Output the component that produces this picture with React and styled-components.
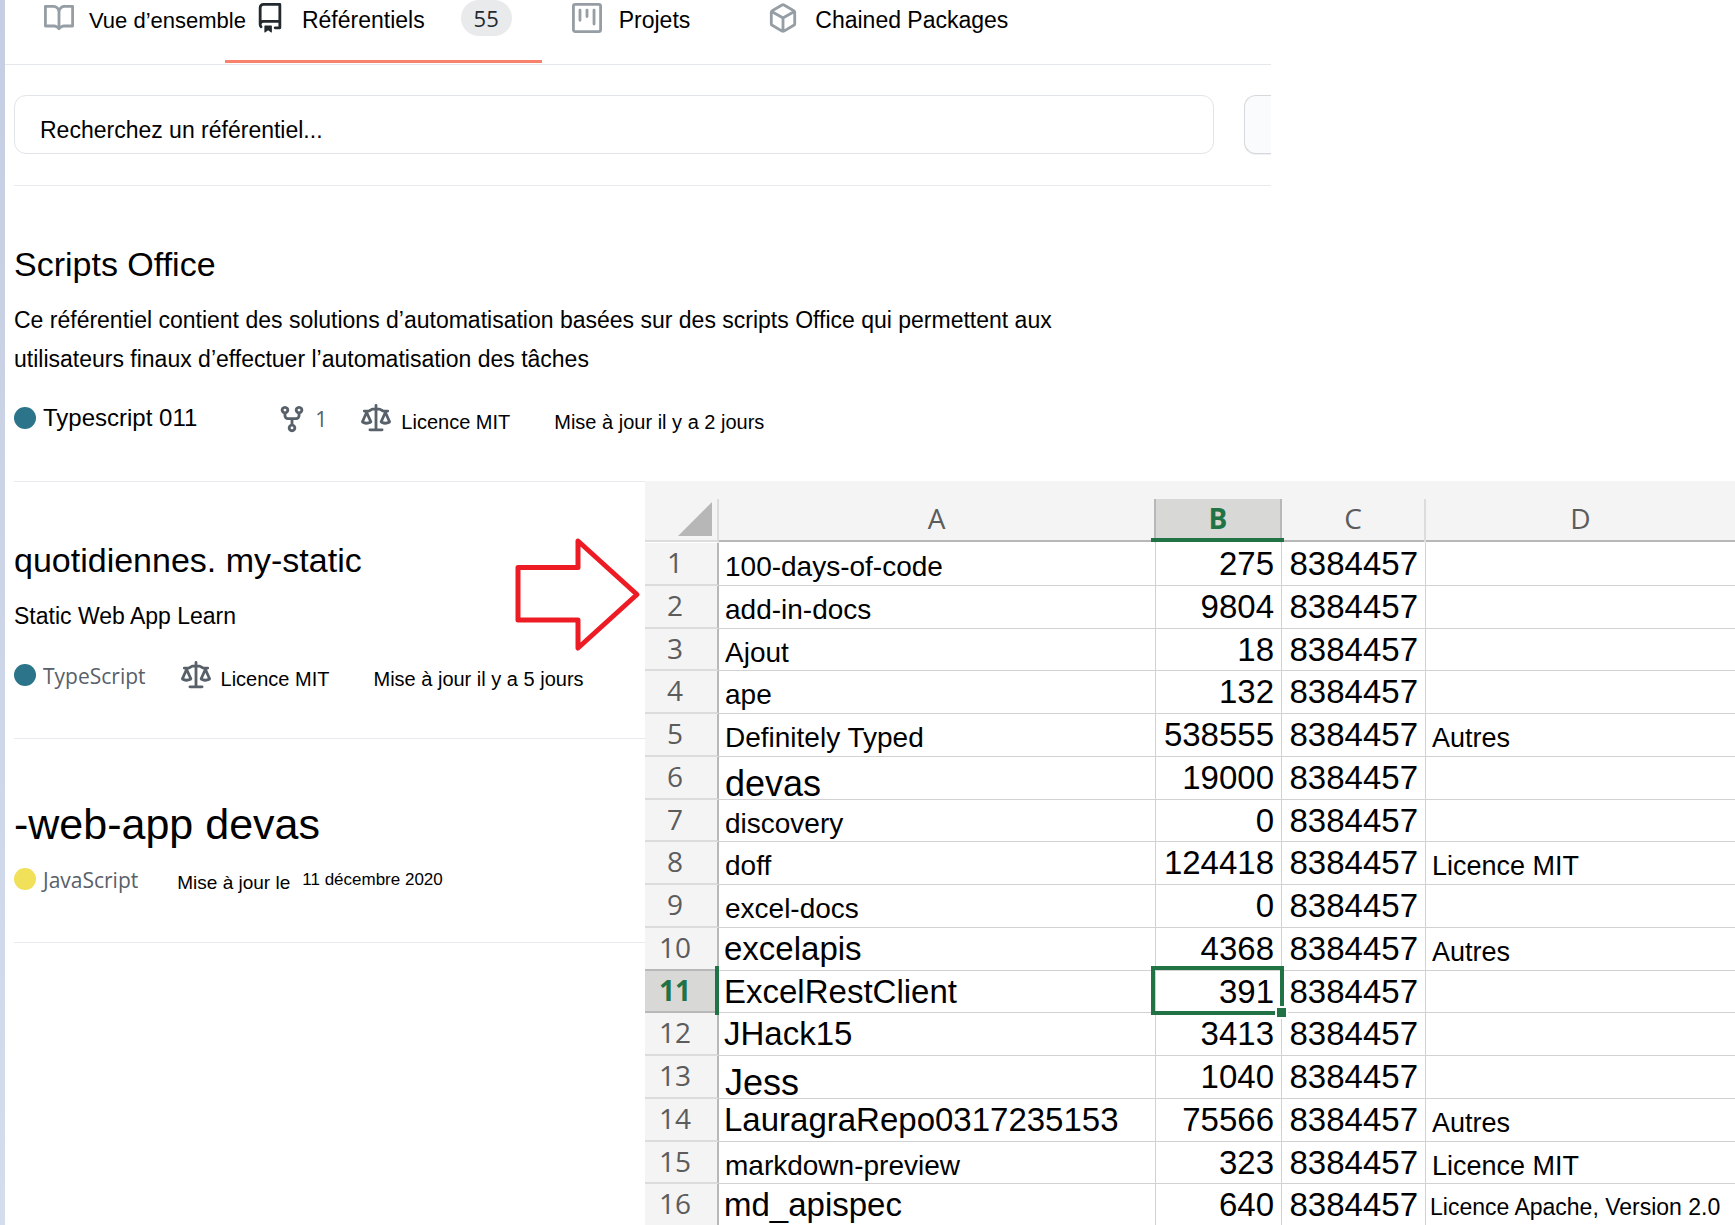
import React from "react";
import styled, { createGlobalStyle, css } from "styled-components";

const sans = `"Liberation Sans", Arial, Helvetica, sans-serif`;
const humanist = `"Open Sans", "Segoe UI", "Noto Sans", sans-serif`;
const green = "#217346";

const GlobalStyle = createGlobalStyle`
  *, *::before, *::after { box-sizing: border-box; }
  body { margin: 0; background: #fff; color: #000; font-family: ${sans}; }
`;

const Page = styled.div`
  display: flex;
  min-height: 100vh;
`;

const Edge = styled.div`
  flex: none;
  width: 5px;
  background: linear-gradient(#c5cee2, #d3ddec);
`;

const Content = styled.div`
  flex: 1;
  min-width: 0;
`;

const Top = styled.div`
  padding-right: 464px;
`;

const Nav = styled.nav`
  display: flex;
  height: 65px;
  padding-left: 39px;
  border-bottom: 1px solid #e4e7eb;
`;

const Tab = styled.a`
  display: flex;
  align-items: flex-start;
  gap: ${(p) => p.$gap || 17}px;
  height: 63px;
  color: #000;
  text-decoration: none;
  white-space: nowrap;
  font-size: ${(p) => p.$size || 23}px;
  line-height: 41px;
  margin-left: ${(p) => p.$before || 0}px;
  ${(p) =>
    p.$active &&
    css`
      padding: 0 30px;
      border-bottom: 3px solid #f9826c;
    `}

  svg {
    margin-top: 3px;
  }
`;

const Badge = styled.span`
  margin-left: 19px;
  min-width: 51px;
  padding: 0 12px;
  border-radius: 18px;
  background: #e8eaec;
  color: #24292e;
  font-family: ${humanist};
  font-size: 22px;
  line-height: 36px;
  text-align: center;
`;

const Svg = styled.svg`
  flex: none;
  display: block;
  width: 30px;
  height: 30px;
  fill: ${(p) => p.$color};
`;

const SearchForm = styled.form`
  display: flex;
  gap: 30px;
  margin: 30px 0 0 9px;
  padding-bottom: 31px;
  border-bottom: 1px solid #e8eaed;
`;

const SearchInput = styled.input`
  flex: 1;
  min-width: 0;
  height: 59px;
  padding: 11px 25px 0;
  border: 1px solid #e1e4e8;
  border-radius: 12px;
  background: #fff;
  font: 23px ${sans};
  color: #000;

  &::placeholder {
    color: #000;
    opacity: 1;
  }
`;

const FilterButton = styled.button`
  width: 27px;
  height: 59px;
  padding: 0;
  border: 1px solid #d5d8dc;
  border-right: 0;
  border-radius: 12px 0 0 12px;
  background: #fafbfc;
  box-shadow: 0 1px 0 #f0f1f3;
`;

const Bottom = styled.div`
  position: relative;
  display: grid;
  grid-template-columns: 640px minmax(0, 1fr);
`;

const RepoColumn = styled.div`
  padding-left: 9px;
`;

const Repo = styled.article`
  padding: 58px 0 47px ${(p) => p.$indent || 0}px;
`;

const Rule = styled.hr`
  height: 1px;
  margin: 0;
  border: 0;
  background: #e8eaed;
`;

const Title = styled.h3`
  margin: 0;
  font-weight: 400;
  font-size: ${(p) => (p.$large ? 43 : 34)}px;
  line-height: ${(p) => (p.$large ? 54 : 40)}px;
`;

const Description = styled.p`
  max-width: 1080px;
  margin: 17px 0 0;
  font-size: 23px;
  line-height: 39px;
`;

const Meta = styled.div`
  display: flex;
  align-items: flex-start;
  height: 30px;
  margin-top: ${(p) => p.$top || 25}px;
  white-space: nowrap;
`;

const MetaItem = styled.span`
  display: flex;
  gap: ${(p) => p.$gap || 10}px;
  margin-left: ${(p) => p.$before || 0}px;
  font-size: ${(p) => p.$size || 20}px;
  line-height: ${(p) => p.$line || 36}px;
`;

const Soft = styled(MetaItem)`
  font-family: ${humanist};
  font-size: 21px;
  line-height: 30px;
  color: #586069;
`;

const Dot = styled.span`
  flex: none;
  width: 22px;
  height: 22px;
  margin-top: 3px;
  border-radius: 50%;
  background: ${(p) => p.$color};
`;

const Arrow = styled.svg`
  position: absolute;
  left: 509px;
  top: 57px;
  width: 128px;
  height: 114px;
`;

const Sheet = styled.div`
  padding-top: 18px;
  background: #f4f4f4;
  overflow: hidden;
`;

const Table = styled.table`
  width: 100%;
  table-layout: fixed;
  border-collapse: separate;
  border-spacing: 0;
`;

const Col = styled.col`
  width: ${(p) => p.$w}px;
`;

const ColHead = styled.th`
  position: relative;
  height: 44px;
  padding: 0;
  vertical-align: top;
  font: ${(p) => (p.$active ? 700 : 400)} 28px/38px ${humanist};
  color: ${(p) => (p.$active ? green : "#5c5c5c")};
  background: ${(p) => (p.$active ? "#d8d8d6" : "#f4f4f4")};
  border-right: 2px solid ${(p) => (p.$strong ? "#b8b8b8" : "#dcdcdc")};
  border-bottom: 1px solid #fff;
  box-shadow: inset 0 -2px ${(p) => (p.$corner ? "#dcdcdc" : "#b8b8b8")};

  &:last-child {
    border-right: 0;
  }
`;

const HeadMark = styled.span`
  position: absolute;
  z-index: 1;
  left: -5px;
  right: -4px;
  bottom: 0;
  height: 4px;
  background: ${green};
`;

const Corner = styled.svg`
  display: block;
  width: 34px;
  height: 34px;
  margin: 3px 5px 0 auto;
`;

const Row = styled.tr`
  height: 43px;

  &:nth-child(4n + 3) {
    height: 42px;
  }

  &:last-child {
    height: 41px;
  }

  &:last-child > * {
    border-bottom: 0;
  }
`;

const RowHead = styled.th`
  position: relative;
  padding: 0 12px 0 0;
  vertical-align: top;
  text-align: center;
  font: ${(p) => (p.$active ? 700 : 400)} 28px/38px ${humanist};
  color: ${(p) => (p.$active ? green : "#5c5c5c")};
  background: ${(p) => (p.$active ? "#d8d8d6" : "#f4f4f4")};
  border-right: 2px solid #b8b8b8;
  border-bottom: 2px solid ${(p) => (p.$strong ? "#b8b8b8" : "#dcdcdc")};
`;

const RowMark = styled.span`
  position: absolute;
  z-index: 1;
  top: -5px;
  right: -2px;
  bottom: -4px;
  width: 4px;
  background: ${green};
`;

const textKinds = {
  large: css`
    padding: 0 7px 0 5px;
    font-size: 33px;
    line-height: 41px;
  `,
  medium: css`
    padding: 7px 6px 0;
    font-size: 28px;
    line-height: 34px;
  `,
  license: css`
    padding: 7px 6px 0;
    font-size: 27px;
    line-height: 34px;
  `,
  heavy: css`
    padding: 13px 6px 0;
    font-size: 36px;
    line-height: 28px;
  `,
  small: css`
    padding: 5px 0 0 4px;
    font-size: 23px;
    line-height: 36px;
  `,
};

const Cell = styled.td`
  position: relative;
  vertical-align: top;
  white-space: nowrap;
  background: #fff;
  border-right: 1px solid #d2d2d2;
  border-bottom: 1px solid #d2d2d2;
  text-align: ${(p) => (p.$number ? "right" : "left")};
  ${(p) => textKinds[p.$kind || "large"]}

  &:last-child {
    border-right: 0;
  }
`;

const Selection = styled.span`
  position: absolute;
  z-index: 1;
  inset: -5px -3px -3px -5px;
  border: 4px solid ${green};

  &::after {
    content: "";
    position: absolute;
    right: -8px;
    bottom: -8px;
    width: 13px;
    height: 13px;
    border: 2px solid #fff;
    background: ${green};
  }
`;

const paths = {
  book: "M0 1.75A.75.75 0 01.75 1h4.253c1.227 0 2.317.59 3 1.501A3.744 3.744 0 0111.006 1h4.245a.75.75 0 01.75.75v10.5a.75.75 0 01-.75.75h-4.507a2.25 2.25 0 00-1.591.659l-.622.621a.75.75 0 01-1.06 0l-.622-.621A2.25 2.25 0 005.258 13H.75a.75.75 0 01-.75-.75V1.75zm8.755 3a2.25 2.25 0 012.25-2.25H14.5v9h-3.757c-.71 0-1.4.201-1.992.572l.004-7.322zm-1.504 7.324l.004-5.073-.002-2.253A2.25 2.25 0 005.003 2.5H1.5v9h3.757a3.75 3.75 0 011.994.574z",
  repo: "M2 2.5A2.5 2.5 0 014.5 0h8.75a.75.75 0 01.75.75v12.5a.75.75 0 01-.75.75h-2.5a.75.75 0 110-1.5h1.75v-2h-8a1 1 0 00-.714 1.7.75.75 0 01-1.072 1.05A2.495 2.495 0 012 11.5v-9zm10.5-1V9h-8c-.356 0-.694.074-1 .208V2.5a1 1 0 011-1h8zM5 12.25v3.25a.25.25 0 00.4.2l1.45-1.087a.25.25 0 01.3 0L8.6 15.7a.25.25 0 00.4-.2v-3.25a.25.25 0 00-.25-.25h-3.5a.25.25 0 00-.25.25z",
  project:
    "M1.75 0A1.75 1.75 0 000 1.75v12.5C0 15.216.784 16 1.75 16h12.5A1.75 1.75 0 0016 14.25V1.75A1.75 1.75 0 0014.25 0H1.75zM1.5 1.75a.25.25 0 01.25-.25h12.5a.25.25 0 01.25.25v12.5a.25.25 0 01-.25.25H1.75a.25.25 0 01-.25-.25V1.75zM11.75 3a.75.75 0 00-.75.75v7.5a.75.75 0 001.5 0v-7.5a.75.75 0 00-.75-.75zm-8.25.75a.75.75 0 011.5 0v5.5a.75.75 0 01-1.5 0v-5.5zM8 3a.75.75 0 00-.75.75v3.5a.75.75 0 001.5 0v-3.5A.75.75 0 008 3z",
  package:
    "M8.878.392a1.75 1.75 0 00-1.756 0l-5.25 3.045A1.75 1.75 0 001 4.951v6.098c0 .624.332 1.2.872 1.514l5.25 3.045a1.75 1.75 0 001.756 0l5.25-3.045c.54-.313.872-.89.872-1.514V4.951c0-.624-.332-1.2-.872-1.514L8.878.392zM7.875 1.69a.25.25 0 01.25 0l4.63 2.685L8 7.133 3.245 4.375l4.63-2.685zM2.5 5.677v5.372c0 .09.047.171.125.216l4.625 2.683V8.432L2.5 5.677zm6.25 8.271l4.625-2.683a.25.25 0 00.125-.216V5.677L8.75 8.432v5.516z",
  fork: "M5 3.25a.75.75 0 11-1.5 0 .75.75 0 011.5 0zm0 2.122a2.25 2.25 0 10-1.5 0v.878A2.25 2.25 0 005.75 8.5h1.5v2.128a2.251 2.251 0 101.5 0V8.5h1.5a2.25 2.25 0 002.25-2.25v-.878a2.25 2.25 0 10-1.5 0v.878a.75.75 0 01-.75.75h-4.5A.75.75 0 015 6.25v-.878zm3.75 7.378a.75.75 0 11-1.5 0 .75.75 0 011.5 0zm3-8.75a.75.75 0 100-1.5.75.75 0 000 1.5z",
  law: "M8.75.75a.75.75 0 00-1.5 0V2h-.984c-.305 0-.604.08-.869.23l-1.288.737A.25.25 0 013.984 3H1.75a.75.75 0 000 1.5h.428L.066 9.192a.75.75 0 00.154.838l.53-.53-.53.53v.001l.002.002.002.002.006.006.016.015.045.04a3.514 3.514 0 00.686.45A4.492 4.492 0 003 11c.88 0 1.556-.22 2.023-.454a3.515 3.515 0 00.686-.45l.045-.04.016-.015.006-.006.002-.002.001-.002L5.25 9.5l.53.53a.75.75 0 00.154-.838L3.822 4.5h.162c.305 0 .604-.08.869-.23l1.289-.737a.25.25 0 01.124-.033h.984V13h-2.5a.75.75 0 000 1.5h6.5a.75.75 0 000-1.5h-2.5V3.5h.984a.25.25 0 01.124.033l1.29.736c.264.152.563.231.868.231h.162l-2.112 4.692a.75.75 0 00.154.838l.53-.53-.53.53v.001l.002.002.002.002.006.006.016.015.045.04a3.517 3.517 0 00.686.45A4.492 4.492 0 0013 11c.88 0 1.556-.22 2.023-.454a3.512 3.512 0 00.686-.45l.045-.04.01-.01.006-.005.006-.006.002-.002.001-.002-.529-.531.53.53a.75.75 0 00.154-.838L13.823 4.5h.427a.75.75 0 000-1.5h-2.234a.25.25 0 01-.124-.033l-1.29-.736A1.75 1.75 0 009.735 2H8.75V.75zM1.695 9.227c.285.135.718.273 1.305.273s1.02-.138 1.305-.273L3 6.327l-1.305 2.9zm10 0c.285.135.718.273 1.305.273s1.02-.138 1.305-.273L13 6.327l-1.305 2.9z",
};

function Icon({ name, color = "#959da5" }) {
  return (
    <Svg viewBox="0 0 16 16" $color={color} aria-hidden="true">
      <path fillRule="evenodd" d={paths[name]} />
    </Svg>
  );
}

const rows = [
  ["100-days-of-code", "medium", "275"],
  ["add-in-docs", "medium", "9804"],
  ["Ajout", "medium", "18"],
  ["ape", "medium", "132"],
  ["Definitely Typed", "medium", "538555", "Autres"],
  ["devas", "heavy", "19000"],
  ["discovery", "medium", "0"],
  ["doff", "medium", "124418", "Licence MIT"],
  ["excel-docs", "medium", "0"],
  ["excelapis", "large", "4368", "Autres"],
  ["ExcelRestClient", "large", "391"],
  ["JHack15", "large", "3413"],
  ["Jess", "heavy", "1040"],
  ["LauragraRepo0317235153", "large", "75566", "Autres"],
  ["markdown-preview", "medium", "323", "Licence MIT"],
  ["md_apispec", "large", "640", "Licence Apache, Version 2.0", "small"],
];
const ACTIVE = 11;

function Spreadsheet() {
  return (
    <Sheet>
      <Table>
        <colgroup>
          <Col $w={74} />
          <Col $w={437} />
          <Col $w={126} />
          <Col $w={144} />
          <col />
        </colgroup>
        <thead>
          <tr>
            <ColHead $corner>
              <Corner viewBox="0 0 34 34" aria-hidden="true">
                <path d="M34 0V34H0Z" fill="#b7b7b7" />
              </Corner>
            </ColHead>
            <ColHead scope="col" $strong>A</ColHead>
            <ColHead scope="col" $strong $active>
              B
              <HeadMark />
            </ColHead>
            <ColHead scope="col">C</ColHead>
            <ColHead scope="col">D</ColHead>
          </tr>
        </thead>
        <tbody>
          {rows.map(([name, kind, count, license, licenseKind], i) => {
            const n = i + 1;
            const active = n === ACTIVE;
            return (
              <Row key={name}>
                <RowHead scope="row" $active={active} $strong={active || n === ACTIVE - 1}>
                  {n}
                  {active && <RowMark />}
                </RowHead>
                <Cell $kind={kind}>{name}</Cell>
                <Cell $number>
                  {count}
                  {active && <Selection />}
                </Cell>
                <Cell $number>8384457</Cell>
                <Cell $kind={licenseKind || "license"}>{license}</Cell>
              </Row>
            );
          })}
        </tbody>
      </Table>
    </Sheet>
  );
}

export default function App() {
  return (
    <>
      <GlobalStyle />
      <Page>
        <Edge />
        <Content>
          <Top>
            <Nav>
              <Tab href="#overview" $size={22} $gap={15}>
                <Icon name="book" />
                Vue d’ensemble
              </Tab>
              <Tab href="#repositories" $active $before={-21} aria-current="page">
                <Icon name="repo" color="#24292e" />
                Référentiels
                <Badge>55</Badge>
              </Tab>
              <Tab href="#projects" $before={30}>
                <Icon name="project" />
                Projets
              </Tab>
              <Tab href="#packages" $before={78}>
                <Icon name="package" />
                Chained Packages
              </Tab>
            </Nav>
            <SearchForm role="search">
              <SearchInput
                type="text"
                aria-label="Recherchez un référentiel"
                placeholder="Recherchez un référentiel..."
              />
              <FilterButton type="button" aria-label="Type" />
            </SearchForm>
            <Repo $indent={9}>
              <Title>Scripts Office</Title>
              <Description>
                Ce référentiel contient des solutions d’automatisation basées sur des scripts
                Office qui permettent aux utilisateurs finaux d’effectuer l’automatisation des
                tâches
              </Description>
              <Meta>
                <MetaItem $size={24} $line={28} $gap={7}>
                  <Dot $color="#2b7489" />
                  Typescript 011
                </MetaItem>
                <Soft $before={80} $gap={8}>
                  <Icon name="fork" color="#586069" />
                  1
                </Soft>
                <MetaItem $before={34}>
                  <Icon name="law" color="#586069" />
                  Licence MIT
                </MetaItem>
                <MetaItem $before={44}>Mise à jour il y a 2 jours</MetaItem>
              </Meta>
            </Repo>
          </Top>
          <Bottom>
            <RepoColumn>
              <Rule />
              <Repo>
                <Title>quotidiennes. my-static</Title>
                <Description>Static Web App Learn</Description>
                <Meta>
                  <Soft $gap={7}>
                    <Dot $color="#2b7489" />
                    TypeScript
                  </Soft>
                  <MetaItem $before={35}>
                    <Icon name="law" color="#586069" />
                    Licence MIT
                  </MetaItem>
                  <MetaItem $before={44}>Mise à jour il y a 5 jours</MetaItem>
                </Meta>
              </Repo>
              <Rule />
              <Repo>
                <Title $large>-web-app devas</Title>
                <Meta $top={14}>
                  <Soft $gap={7}>
                    <Dot $color="#f1e05a" />
                    JavaScript
                  </Soft>
                  <MetaItem $before={39} $size={19}>
                    Mise à jour le
                  </MetaItem>
                  <MetaItem $before={12} $size={17} $line={30}>
                    11 décembre 2020
                  </MetaItem>
                </Meta>
              </Repo>
              <Rule />
            </RepoColumn>
            <Spreadsheet />
            <Arrow viewBox="0 0 128 114" aria-hidden="true">
              <path
                d="M4 29.500H64V3L123 56.500L64 110V82H4Z"
                fill="#fff"
                stroke="#ed1c24"
                strokeWidth="5"
                strokeLinejoin="round"
              />
            </Arrow>
          </Bottom>
        </Content>
      </Page>
    </>
  );
}
